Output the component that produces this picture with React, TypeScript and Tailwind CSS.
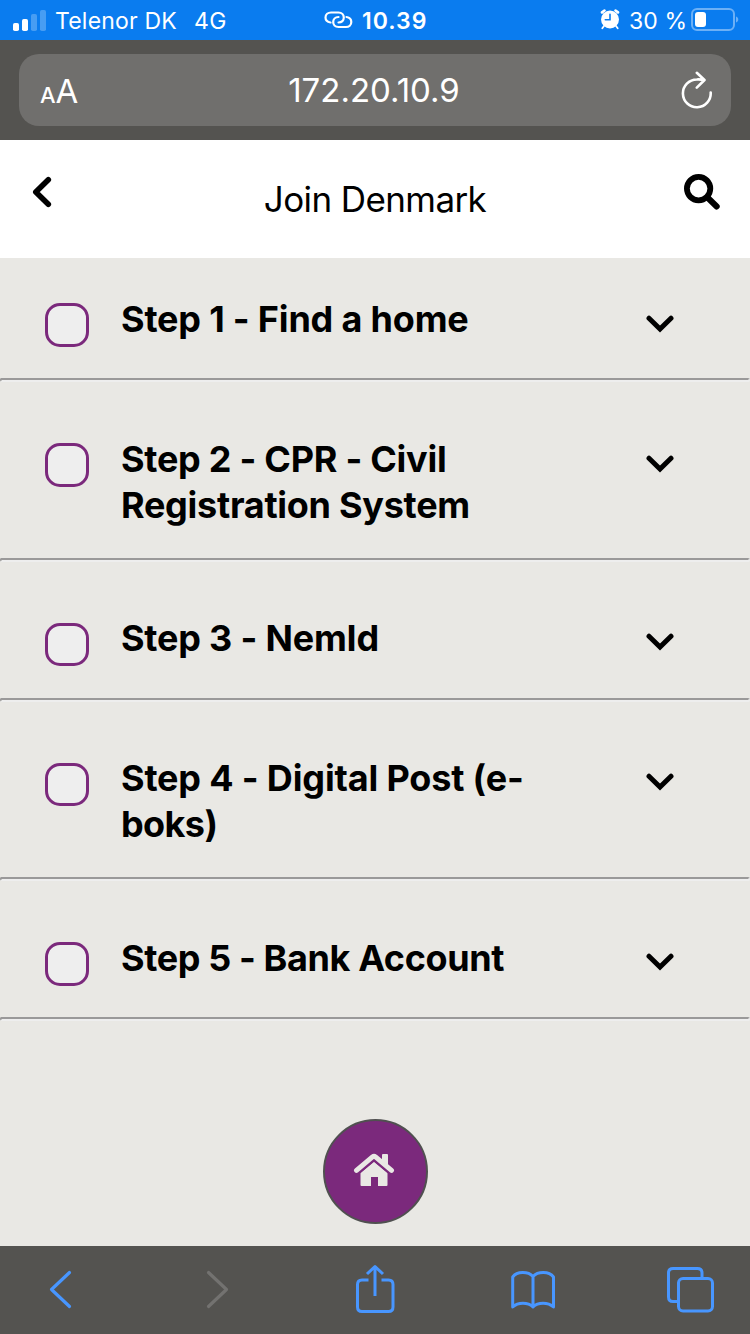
const steps = [
  {
    lines: [{ text: 'Step 1 - Find a home', tracking: 'tracking-[-0.18px]' }],
    row: 'h-[120px] pt-[38px]', box: 'h-11 mt-[7px]', chevron: 'mt-[18px]',
  },
  {
    lines: [
      { text: 'Step 2 - CPR - Civil', tracking: 'tracking-[-0.26px]' },
      { text: 'Registration System', tracking: 'tracking-[-0.27px]' },
    ],
    row: 'h-[176px] pt-[54px]', box: 'h-11 mt-[7px]', chevron: 'mt-[18px]',
  },
  {
    lines: [{ text: 'Step 3 - NemId', tracking: 'tracking-[-0.2px]' }],
    row: 'h-[136px] pt-[53px]', box: 'h-[43px] mt-2', chevron: 'mt-[17px]',
  },
  {
    lines: [
      { text: 'Step 4 - Digital Post (e-', tracking: 'tracking-[-0.16px]' },
      { text: 'boks)', tracking: 'tracking-[-0.6px]' },
    ],
    row: 'h-[175px] pt-[53px]', box: 'h-[43px] mt-2', chevron: 'mt-[17px]',
  },
  {
    lines: [{ text: 'Step 5 - Bank Account', tracking: 'tracking-[-0.38px]' }],
    row: 'h-[136px] pt-[54px]', box: 'h-11 mt-[7px]', chevron: 'mt-[17px]',
  },
];

function StatusBar() {
  return (
    <div className="flex h-10 shrink-0 items-center bg-[#0a7cef] text-[23px] leading-[40px] text-white">
      <svg className="ml-[13px] mt-[-1px] shrink-0" width="33" height="22" viewBox="0 0 33 22" fill="currentColor">
        <rect x="0" y="14" width="6" height="8" rx="1.8" />
        <rect x="9" y="10" width="6" height="12" rx="1.8" />
        <rect x="18" y="5" width="6" height="17" rx="1.8" opacity=".25" />
        <rect x="27" y="1" width="6" height="21" rx="1.8" opacity=".25" />
      </svg>
      <span className="ml-[9px] mt-[2px] w-[139px] shrink-0 whitespace-nowrap tracking-[0.2px]">Telenor DK</span>
      <span className="mt-[2px] w-[130px] shrink-0 whitespace-nowrap tracking-[0.4px]">4G</span>
      <svg className="mt-[-1px] shrink-0" width="29" height="18" viewBox="0 0 29 18" fill="none" stroke="currentColor" strokeWidth="2.200" strokeLinecap="round">
        <path d="M6.500 11.500C3.500 11 1.500 9 1.500 6.500 1.500 3.500 4 1.500 7 1.500H14.500C17.800 1.500 19.800 3.800 19.800 6.600 19.800 9.400 17.800 11.500 14.500 11.500" />
        <path d="M22.500 6C25.500 6.500 27.300 8.500 27.300 11 27.300 14 25 16 22 16H14.500C11 16 9.200 13.700 9.200 11 9.200 8.200 11.200 6 14.500 6" />
      </svg>
      <span className="ml-[9px] mt-[2px] w-[238px] shrink-0 font-semibold tracking-[1px]">10.39</span>
      <svg className="mt-[-2px] shrink-0" width="20" height="21" viewBox="0 0 20 21">
        <g fill="none" stroke="white" strokeWidth="2.600" strokeLinecap="round">
          <path d="M2 3.400L4.500 1.500M18 3.400L15.500 1.500" />
          <path d="M4 17L2.300 19.200M16 17L17.700 19.200" strokeWidth="1.800" />
        </g>
        <circle cx="10" cy="10.500" r="9" fill="white" />
        <path d="M10 5.200V10.800H5.300" fill="none" stroke="#0a7cef" strokeWidth="1.600" strokeLinecap="round" />
      </svg>
      <span className="ml-[9px] mt-[2px] w-[62px] shrink-0 whitespace-nowrap tracking-[0.1px]">30 %</span>
      <svg className="shrink-0" width="48" height="24" viewBox="0 0 48 24">
        <rect x="1" y="1" width="42" height="21" rx="5" fill="none" stroke="#6cb0f6" strokeWidth="2" />
        <rect x="4" y="4" width="11" height="15" rx="3" fill="white" />
        <path d="M45 8.500C48 9.500 48 13.500 45 14.500Z" fill="#6cb0f6" />
      </svg>
    </div>
  );
}

function AddressBar() {
  return (
    <div className="h-[100px] shrink-0 bg-[#545350] px-[19px] pt-[14px]">
      <div className="flex h-[72px] items-center justify-between rounded-[20px] bg-[#706f6d] px-[21px] text-white">
        <div className="flex w-[60px] items-baseline pt-[5px]">
          <span className="text-[22px] font-medium leading-[40px]">A</span>
          <span className="text-[33px] leading-[40px]">A</span>
        </div>
        <span className="mr-[2px] whitespace-nowrap text-[33px] leading-[40px]">172.20.10.9</span>
        <div className="flex w-[60px] justify-end">
          <svg className="mr-[-3px]" width="32" height="38" viewBox="0 0 32 38" fill="none" stroke="currentColor" strokeWidth="2.600" strokeLinecap="round" strokeLinejoin="round">
            <path d="M29.700 21.500A13.900 13.900 0 1 1 15.800 8.500C18.300 8.300 20.500 8.500 22.500 9M15.800 1.800L23.500 9L15.800 16.700" />
          </svg>
        </div>
      </div>
    </div>
  );
}

function PageHeader() {
  return (
    <header className="flex h-[118px] shrink-0 items-start justify-between bg-white pl-8 pr-[30px] text-black">
      <div className="w-[60px] pt-[36px]">
        <svg width="20" height="32" viewBox="0 0 20 32" fill="none" stroke="currentColor" strokeWidth="5.600" strokeLinecap="round" strokeLinejoin="round">
          <path d="M16.300 3.700L3.800 16L16.300 28.300" />
        </svg>
      </div>
      <h1 className="mr-[2px] mt-[36px] whitespace-nowrap text-[35px] leading-[46px] tracking-[-0.6px]">Join Denmark</h1>
      <div className="flex w-[60px] justify-end pt-[34px]">
        <svg width="36" height="37" viewBox="0 0 36 37" fill="none" stroke="currentColor" strokeWidth="5.800">
          <circle cx="14.600" cy="14.600" r="11.700" />
          <path d="M24 24L32.700 32.500" strokeWidth="6" strokeLinecap="round" />
        </svg>
      </div>
    </header>
  );
}

function Toolbar() {
  return (
    <nav className="flex h-[88px] shrink-0 items-start bg-[#545350] pl-[49px] pt-[18px] text-[#4896ff]">
      <svg className="shrink-0" width="157" height="52" viewBox="0 0 157 52" fill="none" stroke="currentColor" strokeWidth="3.200" strokeLinecap="round" strokeLinejoin="round">
        <path d="M20.500 8.500L2.500 25.500L20.500 42.500" />
      </svg>
      <svg className="shrink-0 text-[#737270]" width="149" height="52" viewBox="0 0 149 52" fill="none" stroke="currentColor" strokeWidth="3.200" strokeLinecap="round" strokeLinejoin="round">
        <path d="M2.500 8.500L20.500 25.500L2.500 42.500" />
      </svg>
      <svg className="shrink-0" width="155" height="52" viewBox="0 0 155 52" fill="none" stroke="currentColor" strokeWidth="3" strokeLinejoin="round">
        <path d="M13.500 16H7Q2.500 16 2.500 20.500V43Q2.500 47.500 7 47.500H33.500Q38 47.500 38 43V20.500Q38 16 33.500 16H26.500" />
        <path d="M20 32V2.500M12 10L20 2.500L28 10" />
      </svg>
      <svg className="shrink-0" width="156" height="52" viewBox="0 0 156 52" fill="none" stroke="currentColor" strokeWidth="3" strokeLinejoin="round">
        <path d="M23 12.500C18 7.200 7 7.200 2.700 13V43C8 38 18 38 23 43C28 38 38 38 43.500 43V13C39 7.200 28 7.200 23 12.500V43" />
      </svg>
      <svg className="shrink-0" width="50" height="52" viewBox="0 0 50 52" fill="none" stroke="currentColor" strokeWidth="3">
        <path d="M36 14V9Q36 4.500 31.500 4.500H7Q2.500 4.500 2.500 9V33Q2.500 37.500 7 37.500H12" />
        <rect x="12.500" y="14.500" width="34" height="32.500" rx="4.500" />
      </svg>
    </nav>
  );
}

export default function App() {
  return (
    <div className="flex h-[1334px] w-[750px] flex-col overflow-hidden bg-[#e9e8e4] font-['Inter',sans-serif] [font-feature-settings:'calt'_0]">
      <StatusBar />
      <AddressBar />
      <PageHeader />
      <main className="flex min-h-0 flex-1 flex-col">
        {steps.map((step) => (
          <section key={step.lines[0].text} className="shrink-0">
            <div className={`flex items-start pl-[45px] ${step.row}`}>
              <div className={`w-11 shrink-0 rounded-[15px] border-3 border-[#7b297c] bg-[#eeeeee] ${step.box}`} />
              <h2 className="ml-8 w-[525px] shrink-0 text-[36px] font-bold leading-[46px] text-black">
                {step.lines.map((line) => (
                  <span key={line.text} className={`block whitespace-nowrap ${line.tracking}`}>{line.text}</span>
                ))}
              </h2>
              <svg className={`shrink-0 ${step.chevron}`} width="28" height="20" viewBox="0 0 28 20" fill="none" stroke="black" strokeWidth="5" strokeLinecap="round">
                <path d="M3 4.200L14 15L25 4.200" />
              </svg>
            </div>
            <div className="h-1 rounded-[2px] border-2 border-[#9a9999] border-b-[#eeeeee] border-r-[#eeeeee]" />
          </section>
        ))}
        <div className="flex justify-center pt-[98px]">
          <button className="flex size-[105px] items-center justify-center rounded-full border-2 border-[#505050] bg-[#7b297c]">
            <svg className="mr-[2px] mt-[-3px]" width="42" height="34" viewBox="0 0 42 34" fill="#e9e8e4">
              <path d="M21 8.500L34.500 20V32Q34.500 33 33.500 33H25V24H18V33H8.500Q7.500 33 7.500 32V20Z" />
              <path d="M29 2Q29 1 30 1H34Q35 1 35 2V14L29 10Z" />
              <path d="M5 20.700L21 7.500L37 20.700" fill="none" stroke="#7b297c" strokeWidth="2.200" />
              <path d="M3.500 17.300L19.500 3.900Q21 2.700 22.500 3.900L38.500 17.300" fill="none" stroke="#e9e8e4" strokeWidth="5" strokeLinecap="round" strokeLinejoin="round" />
            </svg>
          </button>
        </div>
      </main>
      <Toolbar />
    </div>
  );
}
